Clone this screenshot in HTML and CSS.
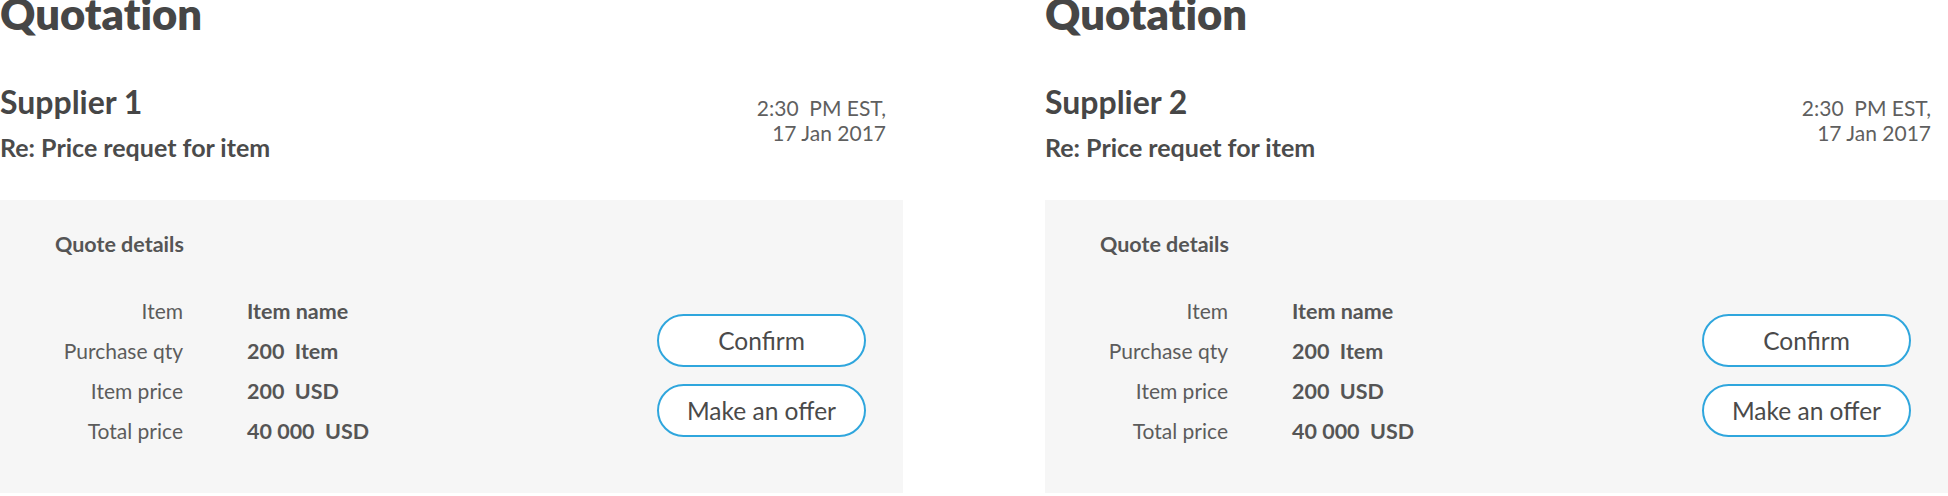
FILE: index.html
```html
<!DOCTYPE html>
<html lang="en">
<head>
<meta charset="utf-8">
<title>Quotation</title>
<link rel="stylesheet" href="styles.css">
</head>
<body>
<main class="page">
  <section class="quote">
    <h1 class="quote__title">Quotation</h1>
    <header class="quote__head">
      <div class="quote__from">
        <h2 class="quote__supplier">Supplier 1</h2>
        <p class="quote__subject">Re: Price requet for item</p>
      </div>
      <p class="quote__date">2:30&nbsp; PM EST,<br>17 Jan 2017</p>
    </header>
    <div class="details">
      <h3 class="details__title">Quote details</h3>
      <div class="details__body">
        <dl class="details__table">
          <dt>Item</dt><dd>Item name</dd>
          <dt>Purchase qty</dt><dd>200&nbsp; Item</dd>
          <dt>Item price</dt><dd>200&nbsp; USD</dd>
          <dt>Total price</dt><dd>40 000&nbsp; USD</dd>
        </dl>
        <div class="details__actions">
          <button class="btn" type="button">Confirm</button>
          <button class="btn" type="button">Make an offer</button>
        </div>
      </div>
    </div>
  </section>
  <section class="quote">
    <h1 class="quote__title">Quotation</h1>
    <header class="quote__head">
      <div class="quote__from">
        <h2 class="quote__supplier">Supplier 2</h2>
        <p class="quote__subject">Re: Price requet for item</p>
      </div>
      <p class="quote__date">2:30&nbsp; PM EST,<br>17 Jan 2017</p>
    </header>
    <div class="details">
      <h3 class="details__title">Quote details</h3>
      <div class="details__body">
        <dl class="details__table">
          <dt>Item</dt><dd>Item name</dd>
          <dt>Purchase qty</dt><dd>200&nbsp; Item</dd>
          <dt>Item price</dt><dd>200&nbsp; USD</dd>
          <dt>Total price</dt><dd>40 000&nbsp; USD</dd>
        </dl>
        <div class="details__actions">
          <button class="btn" type="button">Confirm</button>
          <button class="btn" type="button">Make an offer</button>
        </div>
      </div>
    </div>
  </section>
</main>
</body>
</html>
```

FILE: styles.css
```css
* { box-sizing: border-box; }

html, body {
  margin: 0;
  padding: 0;
  background: #ffffff;
}

body {
  font-family: Lato, "Open Sans", "Liberation Sans", sans-serif;
  font-variant-ligatures: none;
  color: #474747;
  overflow: hidden;
}

.page {
  display: flex;
  gap: 142px;
  width: 1948px;
}

.quote {
  width: 903px;
  flex: 0 0 903px;
}

.quote__title {
  margin: 0;
  font-size: 43.5px;
  line-height: 26px;
  font-weight: 800;
  color: #464646;
}

.quote__head {
  display: flex;
  justify-content: space-between;
  align-items: flex-start;
  margin-top: 58px;
  padding-right: 17px;
}

.quote__supplier {
  margin: 0;
  font-size: 32px;
  line-height: 36px;
  font-weight: 700;
  color: #464646;
}

.quote__subject {
  margin: 12px 0 0;
  font-size: 25px;
  line-height: 30px;
  font-weight: 700;
  color: #4b4b4b;
}

.quote__date {
  margin: 11px 0 0;
  font-size: 21px;
  line-height: 25px;
  text-align: right;
  color: #5f5f5f;
}

.details {
  margin-top: 38px;
  height: 293px;
  background: #f6f6f6;
  padding: 32px 37px 0 55px;
}

.details__title {
  margin: 0;
  font-size: 21.5px;
  line-height: 24px;
  font-weight: 700;
  color: #555555;
}

.details__body {
  display: flex;
  justify-content: space-between;
  align-items: flex-start;
  margin-top: 35px;
}

.details__table {
  display: grid;
  grid-template-columns: 128px auto;
  column-gap: 64px;
  margin: 0;
  font-size: 21px;
  line-height: 40px;
}

.details__table dt {
  text-align: right;
  color: #5c5c5c;
}

.details__table dd {
  margin: 0;
  font-size: 21.5px;
  font-weight: 700;
  color: #555555;
}

.details__actions {
  display: flex;
  flex-direction: column;
  gap: 17px;
  margin-top: 23px;
}

.btn {
  width: 209px;
  height: 53px;
  border: 2px solid #2fa6dd;
  border-radius: 27px;
  background: #ffffff;
  font-family: Lato, "Open Sans", "Liberation Sans", sans-serif;
  font-size: 24.5px;
  color: #4a4a4a;
  padding: 0;
  cursor: pointer;
}
```
